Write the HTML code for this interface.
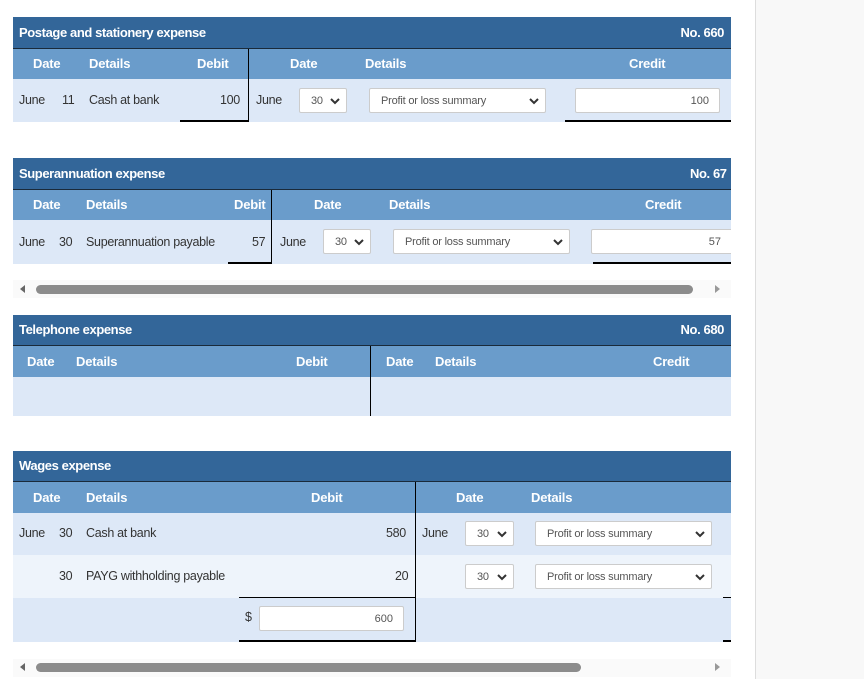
<!DOCTYPE html>
<html><head><meta charset="utf-8"><style>
*{margin:0;padding:0;box-sizing:border-box}
body{width:864px;height:679px;background:#fff;position:relative;overflow:hidden;font-family:"Liberation Sans",sans-serif;font-size:13px;color:#333}
.a{position:absolute}
.title{background:#336699;color:#fff;font-weight:bold;font-size:13px;letter-spacing:-0.4px;border-bottom:1px solid #1a2a3a}
.hdr{background:#6a9ccb;color:#fff;font-weight:bold;font-size:13px;letter-spacing:-0.2px}
.row,.row2{font-size:12.5px;letter-spacing:-0.3px;color:#333}
.row{background:#dde8f7}
.row2{background:#eef4fb}
.t{position:absolute;white-space:nowrap}
.sel{position:absolute;background:#fff;border:1px solid #ccc;border-radius:2px;font-size:11px;color:#555;height:25px;display:flex;align-items:center;padding-left:11px;letter-spacing:-0.2px}
.sel svg{position:absolute;right:6px;top:8px}
.inp{position:absolute;background:#fff;border:1px solid #ccc;border-radius:2px;font-size:11px;color:#555;height:25px;display:flex;align-items:center;justify-content:flex-end;padding-right:10px}
.vl{position:absolute;width:1px;background:#000}
.hl{position:absolute;height:2px;background:#000}
.sb{position:absolute;height:9px;background:#8c8c8c;border-radius:5px}
</style></head><body>
<div class="a" style="left:755px;top:0;width:109px;height:679px;background:#f8f8f8;border-left:1px solid #ddd"></div>

<!-- Table 1 -->
<div class="a title" style="left:13px;top:17px;width:718px;height:32px"><span class="t" style="left:6px;top:8px">Postage and stationery expense</span><span class="t" style="right:7px;top:8px">No. 660</span></div>
<div class="a hdr" style="left:13px;top:49px;width:718px;height:30px">
<span class="t" style="left:20px;top:7px">Date</span><span class="t" style="left:76px;top:7px">Details</span><span class="t" style="left:184px;top:7px">Debit</span>
<span class="t" style="left:277px;top:7px">Date</span><span class="t" style="left:352px;top:7px">Details</span><span class="t" style="left:616px;top:7px">Credit</span></div>
<div class="a row" style="left:13px;top:79px;width:718px;height:43px">
<span class="t" style="left:6px;top:14px">June</span><span class="t" style="left:49px;top:14px">11</span><span class="t" style="left:76px;top:14px">Cash at bank</span><span class="t" style="left:207px;top:14px">100</span>
<span class="t" style="left:243px;top:14px">June</span></div>
<div class="sel" style="left:299px;top:88px;width:48px">30<svg width="10" height="8" viewBox="0 0 10 8"><path d="M1 2l4 4 4-4" stroke="#333" stroke-width="2" fill="none"/></svg></div>
<div class="sel" style="left:369px;top:88px;width:177px">Profit or loss summary<svg width="10" height="8" viewBox="0 0 10 8"><path d="M1 2l4 4 4-4" stroke="#333" stroke-width="2" fill="none"/></svg></div>
<div class="inp" style="left:575px;top:88px;width:145px">100</div>
<div class="vl" style="left:248px;top:49px;height:73px"></div>
<div class="hl" style="left:180px;top:120px;width:69px"></div>
<div class="hl" style="left:565px;top:120px;width:166px"></div>

<!-- Table 2 -->
<div class="a title" style="left:13px;top:158px;width:718px;height:32px"><span class="t" style="left:6px;top:8px">Superannuation expense</span><span class="t" style="left:677px;top:8px">No. 67</span></div>
<div class="a hdr" style="left:13px;top:190px;width:718px;height:30px">
<span class="t" style="left:20px;top:7px">Date</span><span class="t" style="left:73px;top:7px">Details</span><span class="t" style="left:221px;top:7px">Debit</span>
<span class="t" style="left:301px;top:7px">Date</span><span class="t" style="left:376px;top:7px">Details</span><span class="t" style="left:632px;top:7px">Credit</span></div>
<div class="a row" style="left:13px;top:220px;width:718px;height:44px">
<span class="t" style="left:6px;top:15px">June</span><span class="t" style="left:46px;top:15px">30</span><span class="t" style="left:73px;top:15px">Superannuation payable</span><span class="t" style="left:239px;top:15px">57</span>
<span class="t" style="left:267px;top:15px">June</span></div>
<div class="sel" style="left:323px;top:229px;width:48px">30<svg width="10" height="8" viewBox="0 0 10 8"><path d="M1 2l4 4 4-4" stroke="#333" stroke-width="2" fill="none"/></svg></div>
<div class="sel" style="left:393px;top:229px;width:177px">Profit or loss summary<svg width="10" height="8" viewBox="0 0 10 8"><path d="M1 2l4 4 4-4" stroke="#333" stroke-width="2" fill="none"/></svg></div>
<div class="inp" style="left:591px;top:229px;width:145px;padding-right:14px">57</div>
<div class="a" style="left:731px;top:220px;width:24px;height:50px;background:#fff"></div>
<div class="vl" style="left:271px;top:190px;height:74px"></div>
<div class="hl" style="left:228px;top:262px;width:44px"></div>
<div class="hl" style="left:593px;top:262px;width:138px"></div>

<!-- Scrollbar 1 -->
<div class="a" style="left:13px;top:280px;width:718px;height:18px;background:#fafafa"></div>
<svg class="a" style="left:20px;top:285px" width="6" height="8"><path d="M5 0L0 4l5 4z" fill="#666"/></svg>
<div class="sb" style="left:36px;top:285px;width:657px"></div>
<svg class="a" style="left:715px;top:285px" width="6" height="8"><path d="M0 0l5 4-5 4z" fill="#999"/></svg>

<!-- Table 3 -->
<div class="a title" style="left:13px;top:315px;width:718px;height:31px"><span class="t" style="left:6px;top:7px">Telephone expense</span><span class="t" style="right:7px;top:7px">No. 680</span></div>
<div class="a hdr" style="left:13px;top:346px;width:718px;height:31px">
<span class="t" style="left:14px;top:8px">Date</span><span class="t" style="left:63px;top:8px">Details</span><span class="t" style="left:283px;top:8px">Debit</span>
<span class="t" style="left:373px;top:8px">Date</span><span class="t" style="left:422px;top:8px">Details</span><span class="t" style="left:640px;top:8px">Credit</span></div>
<div class="a row" style="left:13px;top:377px;width:718px;height:39px"></div>
<div class="vl" style="left:370px;top:346px;height:70px"></div>

<!-- Table 4 -->
<div class="a title" style="left:13px;top:451px;width:718px;height:31px"><span class="t" style="left:6px;top:7px">Wages expense</span></div>
<div class="a hdr" style="left:13px;top:482px;width:718px;height:31px">
<span class="t" style="left:20px;top:8px">Date</span><span class="t" style="left:73px;top:8px">Details</span><span class="t" style="left:298px;top:8px">Debit</span>
<span class="t" style="left:443px;top:8px">Date</span><span class="t" style="left:518px;top:8px">Details</span></div>
<div class="a row" style="left:13px;top:513px;width:718px;height:42px">
<span class="t" style="left:6px;top:13px">June</span><span class="t" style="left:46px;top:13px">30</span><span class="t" style="left:73px;top:13px">Cash at bank</span><span class="t" style="left:373px;top:13px">580</span>
<span class="t" style="left:409px;top:13px">June</span></div>
<div class="a row2" style="left:13px;top:555px;width:718px;height:43px">
<span class="t" style="left:46px;top:14px">30</span><span class="t" style="left:73px;top:14px">PAYG withholding payable</span><span class="t" style="left:382px;top:14px">20</span></div>
<div class="a row" style="left:13px;top:598px;width:718px;height:44px">
<span class="t" style="left:232px;top:12px">$</span></div>
<div class="inp" style="left:259px;top:606px;width:145px">600</div>
<div class="sel" style="left:465px;top:521px;width:49px">30<svg width="10" height="8" viewBox="0 0 10 8"><path d="M1 2l4 4 4-4" stroke="#333" stroke-width="2" fill="none"/></svg></div>
<div class="sel" style="left:535px;top:521px;width:177px">Profit or loss summary<svg width="10" height="8" viewBox="0 0 10 8"><path d="M1 2l4 4 4-4" stroke="#333" stroke-width="2" fill="none"/></svg></div>
<div class="sel" style="left:465px;top:564px;width:49px">30<svg width="10" height="8" viewBox="0 0 10 8"><path d="M1 2l4 4 4-4" stroke="#333" stroke-width="2" fill="none"/></svg></div>
<div class="sel" style="left:535px;top:564px;width:177px">Profit or loss summary<svg width="10" height="8" viewBox="0 0 10 8"><path d="M1 2l4 4 4-4" stroke="#333" stroke-width="2" fill="none"/></svg></div>
<div class="vl" style="left:415px;top:482px;height:160px"></div>
<div class="a" style="left:239px;top:597px;width:177px;height:1px;background:#000"></div>
<div class="hl" style="left:239px;top:640px;width:177px"></div>
<div class="a" style="left:723px;top:597px;width:8px;height:1px;background:#000"></div>
<div class="hl" style="left:723px;top:640px;width:8px"></div>

<!-- Scrollbar 2 -->
<div class="a" style="left:13px;top:659px;width:718px;height:18px;background:#fafafa"></div>
<svg class="a" style="left:20px;top:663px" width="6" height="8"><path d="M5 0L0 4l5 4z" fill="#666"/></svg>
<div class="sb" style="left:36px;top:663px;width:545px"></div>
<svg class="a" style="left:715px;top:663px" width="6" height="8"><path d="M0 0l5 4-5 4z" fill="#999"/></svg>
</body></html>
